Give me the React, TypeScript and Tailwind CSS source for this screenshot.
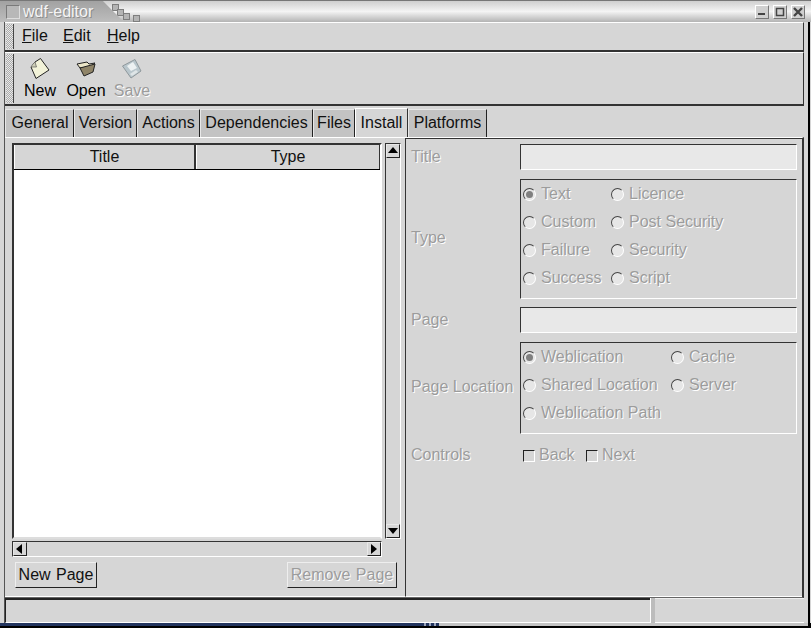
import type { ReactNode } from "react"

const shadow = "text-[#9c9c9c] [text-shadow:1px_1px_0_#ffffff]"

function Tab({ label, width, active }: { label: string; width: string; active?: boolean }) {
  if (active) {
    return (
      <div className={`${width} h-[30px] -mb-px pb-[2px] flex items-center justify-center bg-[#d6d6d6] border-t border-l border-white border-r border-r-[#333]`}>
        {label}
      </div>
    )
  }
  return (
    <div className={`${width} h-[28px] pb-px flex items-center justify-center bg-[#c3c3c3] border-t border-l border-[#e8e8e8] border-r border-r-[#222]`}>
      {label}
    </div>
  )
}

function Handle() {
  return <div className="w-[8px] my-px ml-px shrink-0 bg-[conic-gradient(#aaaaaa_25%,#e8e8e8_0_50%,#aaaaaa_0_75%,#e8e8e8_0)] bg-[length:2px_2px] border-r border-[#444]" />
}

function Radio({ label, on, width }: { label: string; on?: boolean; width: string }) {
  return (
    <div className={`${width} h-[28px] flex items-center gap-[5px] ${shadow}`}>
      <span className="w-[13px] h-[13px] rounded-full shrink-0 flex items-center justify-center bg-[#e6e6e6] border border-[#444] border-r-white border-b-white">
        {on && <span className="w-[7px] h-[7px] rounded-full bg-[#808080]" />}
      </span>
      {label}
    </div>
  )
}

function Check({ label, width }: { label: string; width: string }) {
  return (
    <div className={`${width} flex items-center gap-[4px] ${shadow}`}>
      <span className="w-[12px] h-[12px] mt-[2px] shrink-0 bg-[#d6d6d6] border border-[#222] border-r-white border-b-white" />
      {label}
    </div>
  )
}

function Field({ label, children, nudge }: { label: string; children: ReactNode; nudge?: string }) {
  return (
    <>
      <div className={`${shadow} self-center ${nudge ?? ""}`}>{label}</div>
      {children}
    </>
  )
}

function ArrowBtn({ dir, cls }: { dir: "up" | "down" | "left" | "right"; cls: string }) {
  const pts = {
    up: "1,8 11,8 6,2",
    down: "1,3 11,3 6,9",
    left: "8,1 8,11 2,6",
    right: "3,1 3,11 9,6",
  }[dir]
  return (
    <div className={`${cls} shrink-0 flex items-center justify-center bg-[#d6d6d6] border border-[#e8e8e8] border-r-[#222] border-b-[#222]`}>
      <svg width="12" height="12" viewBox="0 0 12 12"><polygon points={pts} fill="#000" /></svg>
    </div>
  )
}

function ToolItem({ label, disabled, children }: { label: string; disabled?: boolean; children: ReactNode }) {
  return (
    <div className={`w-[46px] flex flex-col items-center ${disabled ? shadow : "text-black"}`}>
      <div className="h-[26px] flex items-end">{children}</div>
      <div className="mt-px leading-[20px]">{label}</div>
    </div>
  )
}

export default function App() {
  return (
    <div className="w-[811px] h-[628px] flex flex-col overflow-hidden bg-[#d6d6d6] text-[16px] text-[#111] font-['Liberation_Sans',Arial,sans-serif]">
      {/* title bar */}
      <div className="h-[22px] shrink-0 flex items-center bg-gradient-to-b from-[#cfcfcf] via-[#f4f4f4] to-[#b4b4b4] border-t border-[#777]">
        <div className="h-full w-[124px] shrink-0 flex items-center bg-gradient-to-b from-[#a2a2a2] to-[#bdbdbd] [clip-path:polygon(0_0,83%_0,100%_100%,0_100%)]">
          <span className="ml-[6px] w-[14px] h-[14px] shrink-0 bg-[#b8b8b8] border border-[#7a7a7a] border-r-[#ddd] border-b-[#ddd]" />
          <span className="ml-[3px] text-[#f4f4f4] [text-shadow:1px_1px_0_#8a8a8a]">wdf-editor</span>
        </div>
        <svg width="40" height="21" viewBox="105 1 40 21" className="shrink-0 -ml-[19px]">
          <g fill="#b4b4b4" stroke="#7e7e7e" strokeWidth="1">
            <rect x="112.5" y="4.5" width="6" height="6" />
            <rect x="117.5" y="9.5" width="6" height="6" />
            <rect x="123.5" y="13.5" width="6" height="6" />
            <rect x="133.5" y="15.5" width="6" height="6" />
          </g>
        </svg>
        <div className="ml-auto mr-[6px] flex gap-[4px]">
          {["min", "max", "close"].map((k) => (
            <div key={k} className="w-[14px] h-[14px] flex items-center justify-center bg-[#d0d0d0] border border-white border-r-[#777] border-b-[#777]">
              <svg width="10" height="10" viewBox="0 0 10 10">
                {k === "min" && <rect x="1" y="6" width="7" height="2" fill="#444" />}
                {k === "max" && <rect x="1.5" y="1.5" width="7" height="7" fill="none" stroke="#444" strokeWidth="1.5" />}
                {k === "close" && <path d="M1 1L9 9M9 1L1 9" stroke="#444" strokeWidth="2.4" />}
              </svg>
            </div>
          ))}
        </div>
      </div>

      {/* window frame */}
      <div className="flex-1 min-h-0 flex flex-col ml-[4px] mr-px pr-[4px] border-l border-[#555] border-r-2 border-r-black">
        {/* menu bar */}
        <div className="h-[30px] shrink-0 flex border-t border-t-white border-r border-r-[#333] border-b-2 border-b-[#333]">
          <Handle />
          <div className="flex items-center pl-[8px] pb-[2px]">
            <span className="w-[41px]"><u>F</u>ile</span>
            <span className="w-[44px]"><u>E</u>dit</span>
            <span><u>H</u>elp</span>
          </div>
        </div>
        {/* toolbar */}
        <div className="h-[54px] shrink-0 flex border-t border-t-white border-r border-r-[#333] border-b-2 border-b-[#333]">
          <Handle />
          <div className="flex pl-[3px] pt-px">
            <ToolItem label="New">
              <svg width="22" height="23" viewBox="30 58 22 23">
                <polygon points="41.5,59.5 50,71 37,79.5 32,68 36,63" fill="#f2f2d8" stroke="#222" strokeWidth="1" />
                <path d="M36 63L37.5 68L32 68" fill="#cfcfb8" stroke="#444" strokeWidth="0.6" />
              </svg>
            </ToolItem>
            <ToolItem label="Open">
              <svg width="22" height="23" viewBox="75 58 22 23">
                <polygon points="77,65 87,63 89,65 95,64 90,68 80,69" fill="#ece6c8" stroke="#222" strokeWidth="1" />
                <polygon points="80,69 95,65 93,73 84,77" fill="#8f8468" stroke="#222" strokeWidth="1" />
              </svg>
            </ToolItem>
            <ToolItem label="Save" disabled>
              <svg width="22" height="23" viewBox="122 58 22 23">
                <polygon points="123.5,67 136,60.5 142,72 132,79" fill="#b9c6cc" stroke="#8f989c" strokeWidth="1" />
                <polygon points="128,67 134,63 138,69 132,72" fill="#edf1f2" />
                <polygon points="131,75 137,71 139,73 133,77" fill="#dfe5e7" />
              </svg>
            </ToolItem>
          </div>
        </div>

        {/* tabs */}
        <div className="h-[30px] shrink-0 flex items-end mt-px">
          <Tab label="General" width="w-[69px] pl-px" />
          <Tab label="Version" width="w-[63px]" />
          <Tab label="Actions" width="w-[63px]" />
          <Tab label="Dependencies" width="w-[113px]" />
          <Tab label="Files" width="w-[42px]" />
          <Tab label="Install" width="w-[53px]" active />
          <Tab label="Platforms" width="w-[79px]" />
        </div>

        {/* tab page */}
        <div className="flex-1 min-h-0 flex border-t border-t-white border-r-2 border-r-[#333] border-b border-b-[#666]">
          {/* left pane */}
          <div className="w-[401px] shrink-0 flex flex-col pt-[5px] pl-[7px] border-r border-[#333] border-b border-b-white">
            <div className="flex gap-[3px]">
              <div className="w-[370px] h-[396px] flex flex-col bg-white border-2 border-[#333] border-r-white border-b-[#ddd]">
                <div className="h-[25px] flex shrink-0 border-b border-black">
                  <div className="w-[182px] flex items-center justify-center bg-[#d6d6d6] border-r-2 border-[#333] border-l border-l-white">Title</div>
                  <div className="flex-1 flex items-center justify-center bg-[#d6d6d6] border-r border-[#333] border-l border-l-white">Type</div>
                </div>
              </div>
              <div className="w-[16px] h-[396px] flex flex-col justify-between border border-[#333] border-r-white border-b-white">
                <ArrowBtn dir="up" cls="h-[14px]" />
                <ArrowBtn dir="down" cls="h-[14px]" />
              </div>
            </div>
            <div className="w-[370px] h-[16px] mt-[2px] flex justify-between border border-[#333] border-r-white border-b-white">
              <ArrowBtn dir="left" cls="w-[14px]" />
              <ArrowBtn dir="right" cls="w-[14px]" />
            </div>
            <div className="mt-[5px] pl-[3px] w-[385px] flex justify-between [word-spacing:1px]">
              <div className="w-[82px] h-[26px] flex items-center justify-center border border-[#eee] border-r-[#222] border-b-[#222]">New Page</div>
              <div className={`w-[110px] h-[26px] flex items-center justify-center border border-[#eee] border-r-[#222] border-b-[#222] ${shadow}`}>Remove Page</div>
            </div>
          </div>

          {/* right pane */}
          <div className="flex-1 border-t border-[#333] border-b border-b-white pt-[5px] pl-[5px] grid grid-cols-[109px_277px] gap-y-[9px] content-start">
            <Field label="Title">
              <div className="h-[26px] bg-[#e8e8e8] border border-[#333] border-r-white border-b-white" />
            </Field>
            <Field label="Type" nudge="pb-[2px]">
              <div className="h-[120px] -mb-px pl-[2px] flex flex-wrap content-start border border-[#333] border-r-white border-b-white">
                <Radio label="Text" on width="w-[88px]" />
                <Radio label="Licence" width="w-[150px]" />
                <Radio label="Custom" width="w-[88px]" />
                <Radio label="Post Security" width="w-[150px]" />
                <Radio label="Failure" width="w-[88px]" />
                <Radio label="Security" width="w-[150px]" />
                <Radio label="Success" width="w-[88px]" />
                <Radio label="Script" width="w-[150px]" />
              </div>
            </Field>
            <Field label="Page">
              <div className="h-[26px] bg-[#e8e8e8] border border-[#333] border-r-white border-b-white" />
            </Field>
            <Field label="Page Location" nudge="pb-[2px]">
              <div className="h-[92px] pl-[2px] flex flex-wrap content-start border border-[#333] border-r-white border-b-white">
                <Radio label="Weblication" on width="w-[148px]" />
                <Radio label="Cache" width="w-[100px]" />
                <Radio label="Shared Location" width="w-[148px]" />
                <Radio label="Server" width="w-[100px]" />
                <Radio label="Weblication Path" width="w-[200px]" />
              </div>
            </Field>
            <Field label="Controls">
              <div className="flex pl-[3px]">
                <Check label="Back" width="w-[63px]" />
                <Check label="Next" width="w-[60px]" />
              </div>
            </Field>
          </div>
        </div>

        {/* status bar */}
        <div className="h-[25px] shrink-0 flex">
          <div className="w-[645px] border-t-2 border-t-[#222] border-l border-l-[#222] border-b border-b-white" />
          <div className="w-[5px] bg-[#bcbcbc] border-l border-white" />
          <div className="flex-1 border-t border-t-[#eee] border-b border-b-white" />
        </div>
      </div>

      {/* bottom edge of the frame, with the desktop panel showing through on the left */}
      <div className="h-[3px] shrink-0 flex">
        <div className="w-[421px] bg-[#23355f]" />
        <div className="w-[18px] bg-[repeating-linear-gradient(90deg,#23355f_0_3px,#9aa4bb_3px_5px)]" />
        <div className="flex-1 bg-[#c4c4c4]" />
        <div className="w-[3px] bg-black" />
      </div>
      <div className="h-[2px] shrink-0 bg-black" />
    </div>
  )
}
